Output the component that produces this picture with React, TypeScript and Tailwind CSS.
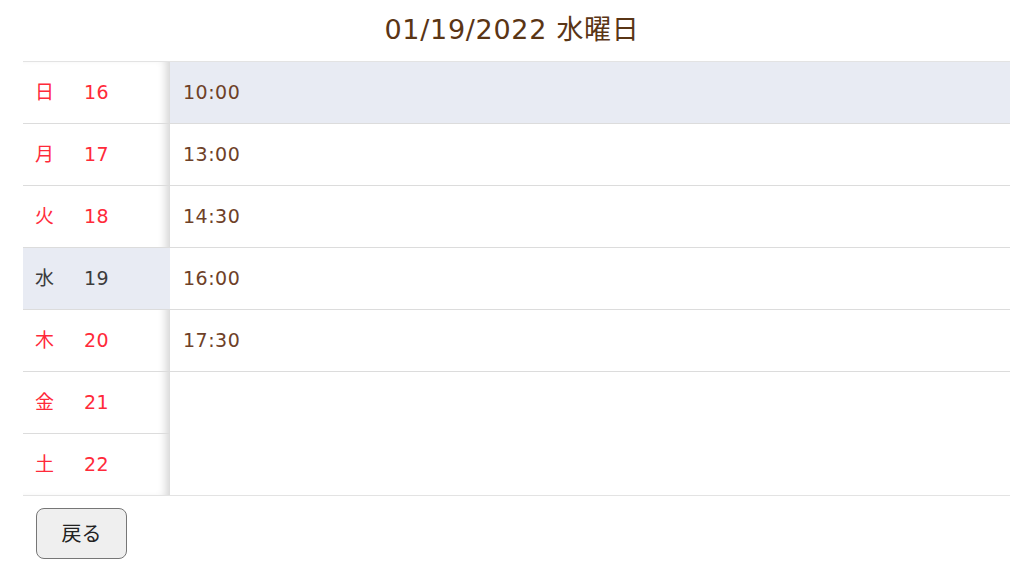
import React from "react";

const days = [
  { d: "日", n: "16" },
  { d: "月", n: "17" },
  { d: "火", n: "18" },
  { d: "水", n: "19", active: true },
  { d: "木", n: "20" },
  { d: "金", n: "21" },
  { d: "土", n: "22" },
];
const times = ["10:00", "13:00", "14:30", "16:00", "17:30"];

export default function App() {
  return (
    <div
      className="w-[1024px] h-[567px] bg-white overflow-hidden"
      style={{ fontFamily: '"DejaVu Sans", "Noto Sans CJK JP", sans-serif' }}
    >
      <div className="h-[61px] flex items-center justify-center text-[27px] tracking-[0.7px] text-[#5a3515]">
        01/19/2022 水曜日
      </div>
      <div className="ml-[23px] w-[987px] border-t border-b border-[#e3e3e3] flex">
        <div className="w-[147px] relative shadow-[inset_-9px_0_8px_-5px_rgba(0,0,0,0.17)]">
          {days.map((x, i) => (
            <div
              key={x.d}
              className={`flex items-center pl-[12px] text-[19px] ${
                i < days.length - 1 ? "h-[62px] border-b border-[#dcdcdc]" : "h-[61px]"
              } ${x.active ? "bg-[#e8ebf3] text-[#3c3c3c]" : "text-[#ff2a3a]"}`}
            >
              <span className="w-[49px]">{x.d}</span>
              <span className="tracking-[0.5px]">{x.n}</span>
            </div>
          ))}
        </div>
        <div className="flex-1">
          {times.map((t, i) => (
            <div
              key={t}
              className={`h-[62px] flex items-center pl-[13px] text-[19px] tracking-[0.5px] text-[#6e4128] border-b border-[#dcdcdc] ${
                i === 0 ? "bg-[#e8ebf3]" : ""
              }`}
            >
              {t}
            </div>
          ))}
        </div>
      </div>
      <div className="ml-[36px] mt-[12px]">
        <button className="w-[91px] h-[51px] rounded-[8px] border border-[#767676] bg-[#efefef] text-[20px] text-[#222]">
          戻る
        </button>
      </div>
    </div>
  );
}
